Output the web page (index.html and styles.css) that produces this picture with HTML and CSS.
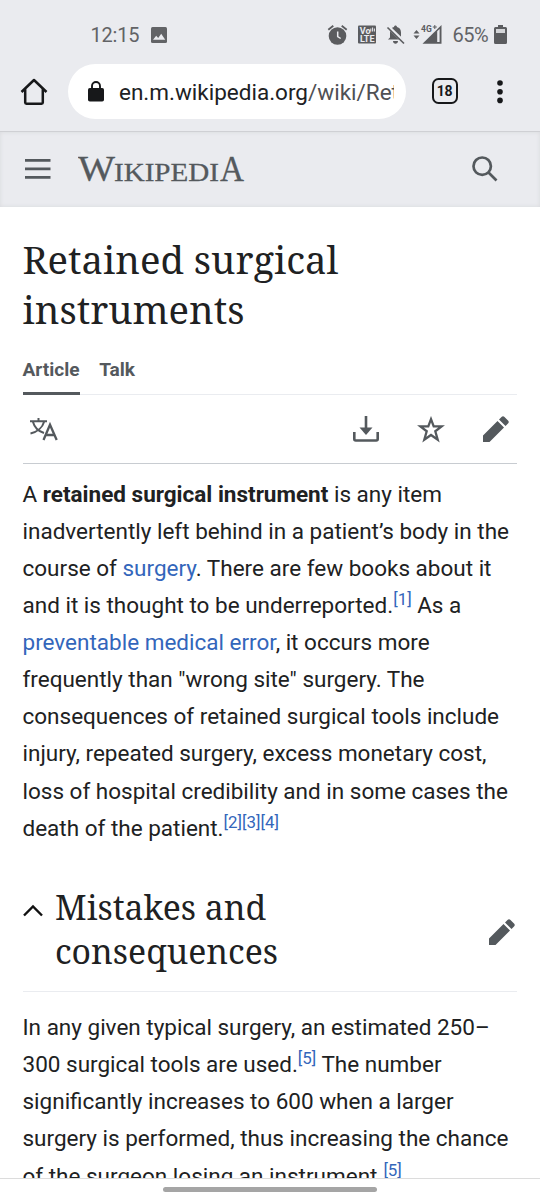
FILE: index.html
```html
<!DOCTYPE html>
<html lang="en">
<head>
<meta charset="utf-8">
<title>Retained surgical instruments</title>
<link rel="stylesheet" href="styles.css">
</head>
<body>
<div class="phone">
  <div class="status">
    <span class="clock">12:15</span>
    <svg class="photo" width="16" height="16" viewBox="0 0 16 16"><rect width="16" height="16" rx="1.5" fill="#626366"/><path d="M2 12.8 5.2 8.7l2 2.3 3-4.2 4 6z" fill="#eaebef"/></svg>
    <svg class="icons" width="115" height="22" viewBox="328 24 115 22" fill="#5b5c5f">
      <circle cx="338.500" cy="36" r="8.800"/><path d="M329.300 29.700l5-4M347.700 29.700l-5-4" stroke="#5b5c5f" stroke-width="1.800"/><path d="M338.700 31.500v5l3 2" fill="none" stroke="#eaebef" stroke-width="1.500"/>
      <rect x="359" y="25.500" width="18" height="18" rx="1"/>
      <text x="360.800" y="33.700" class="volte">Vo</text><text x="361" y="42" class="volte">LTE</text><path d="M371.800 28.500v3M373.600 27.500v4M375.400 28.500v3" stroke="#eaebef" stroke-width="1"/>
      <path d="M389 39.500h15l-2-2v-5c0-3-1.500-5-4-5.500-.2-2-2.800-2-3 0-3 .8-4 3-4 5.500v5zM394 41h5c0 3.500-5 3.500-5 0z"/><path d="M389 26.500l16.500 16" stroke="#eaebef" stroke-width="3.500"/><path d="M388.500 27.500l16.500 16" stroke="#5b5c5f" stroke-width="1.700"/>
      <path d="M414.500 33.500l3-3.500 3 3.500zM414.500 35.500l3 3.500 3-3.500z"/>
      <path d="M423.500 43.700 442.500 25v18.700z"/><path d="M438.200 31.300l2.400-2.300v13h-2.400z" fill="#eaebef"/>
      <path d="M421 24h17v5l-5 4h-12z" fill="#eaebef"/><text x="422" y="31.500" class="network">4G</text><path d="M433.800 27h4M435.800 25v4" stroke="#5b5c5f" stroke-width="1"/>
    </svg>
    <span class="percent">65%</span>
    <svg class="battery" width="13" height="19" viewBox="0 0 13 19"><path d="M4 0h5v2h2.500Q13 2 13 3.500v14q0 1.500-1.500 1.500h-10Q0 19 0 17.500v-14Q0 2 1.500 2H4z" fill="#5b5c5f"/><path d="M2 4h9v4H2z" fill="#d4d5d8"/></svg>
  </div>
  <div class="browser">
    <svg class="home" width="28" height="28" viewBox="0 0 28 28" fill="none" stroke="#17181a" stroke-width="2.500" stroke-linejoin="round"><path d="M1.500 14 14 2l12.500 12M5.200 11v13.500q0 1.200 1.200 1.200h15.200q1.200 0 1.200-1.200V11"/></svg>
    <div class="address">
      <svg width="16" height="21" viewBox="0 0 16 21"><rect y="7" width="16" height="13.500" rx="1.800" fill="#17181a"/><path d="M4 8V5a4 4 0 0 1 8 0v3" fill="none" stroke="#17181a" stroke-width="1.900"/></svg>
      <div class="url">en.m.wikipedia.org<span>/wiki/Ret</span></div>
    </div>
    <div class="tabs">18</div>
    <svg class="more" width="6" height="24" viewBox="0 0 6 24" fill="#17181a"><circle cx="3" cy="3" r="2.800"/><circle cx="3" cy="11.700" r="2.800"/><circle cx="3" cy="20.400" r="2.800"/></svg>
  </div>
  <header class="site">
    <svg class="menu" width="26" height="20" viewBox="0 0 26 20"><path d="M0 1.400h25.500M0 9.900h25.500M0 18.400h25.500" stroke="#54595d" stroke-width="2.700"/></svg>
    <svg class="wordmark" width="168" height="40" viewBox="0 -5 168 40"><text y="25" class="logo"><tspan x="0" class="cap" textLength="37" lengthAdjust="spacingAndGlyphs">W</tspan><tspan x="36" class="small" textLength="105" lengthAdjust="spacingAndGlyphs">IKIPEDI</tspan><tspan x="142" class="cap" textLength="24" lengthAdjust="spacingAndGlyphs">A</tspan></text></svg>
    <svg class="search" width="26" height="26" viewBox="0 0 26 26" fill="none" stroke="#54595d" stroke-width="2.700"><circle cx="10.200" cy="10.200" r="8.700"/><path d="M16.500 16.500l8 8"/></svg>
  </header>
  <main class="page">
    <h1>Retained surgical<br>instruments</h1>
    <nav class="views"><a class="current">Article</a><a>Talk</a></nav>
    <div class="actions">
      <svg class="language" width="30" height="26" viewBox="0 0 30 26" fill="none" stroke="#54595d" stroke-width="2"><path d="M1 4.300h17M9.500 1v3.300M4 5c1.500 5.500 6 9.500 11 11M15 5C13.500 10.500 8 15 1.500 16.500"/><path d="M14.500 23 21 7.700 27.700 23M16.800 18h8.500" stroke-width="2.300"/></svg>
      <svg class="download" width="26" height="26" viewBox="0 0 26 26"><path d="M1.300 16v7q0 1.500 1.500 1.500h20.400q1.500 0 1.500-1.500v-7M13 0v14" fill="none" stroke="#54595d" stroke-width="2.600"/><path d="M6.500 11.500h13L13 19z" fill="#54595d"/></svg>
      <svg class="star" width="28" height="27" viewBox="0 0 28 27"><path d="M14 3.200 16.700 10.400H24.600L18.300 15.300 20.700 23.700 14 19 7.300 23.700 9.700 15.300 3.400 10.400h7.900z" fill="none" stroke="#54595d" stroke-width="2.300"/></svg>
      <svg width="26" height="26" viewBox="0 0 26 26" fill="#54595d"><path d="M0 19.500 14.500 5l6.500 6.500L6.500 26H0zM16 3.500 18.500 1q1.500-1.500 3 0L25 4.500q1.500 1.500 0 3L22.500 10z"/></svg>
    </div>
    <p class="intro">A <b>retained surgical instrument</b> is any item<br>inadvertently left behind in a patient’s body in the<br>course of <a>surgery</a>. There are few books about it<br>and it is thought to be underreported.<sup>[1]</sup> As a<br><a>preventable medical error</a>, it occurs more<br>frequently than "wrong site" surgery. The<br>consequences of retained surgical tools include<br>injury, repeated surgery, excess monetary cost,<br>loss of hospital credibility and in some cases the<br>death of the patient.<sup>[2][3][4]</sup></p>
    <section class="heading">
      <svg class="chevron" width="20" height="13" viewBox="0 0 20 13"><path d="M1 11.500 10 2.500l9 9" fill="none" stroke="#111" stroke-width="2.400"/></svg>
      <h2>Mistakes and<br>consequences</h2>
      <svg class="edit" width="26" height="26" viewBox="0 0 26 26" fill="#54595d"><path d="M0 19.500 14.500 5l6.500 6.500L6.500 26H0zM16 3.500 18.500 1q1.500-1.500 3 0L25 4.500q1.500 1.500 0 3L22.500 10z"/></svg>
    </section>
    <p class="body">In any given typical surgery, an estimated 250–<br>300 surgical tools are used.<sup>[5]</sup> The number<br>significantly increases to 600 when a larger<br>surgery is performed, thus increasing the chance<br>of the surgeon losing an instrument.<sup>[5]</sup></p>
  </main>
  <footer class="gesture"><div class="handle"></div></footer>
</div>
</body>
</html>
```
FILE: styles.css
```css
* { box-sizing: border-box; }
body { margin: 0; background: #fff; font-family: Roboto, "Liberation Sans", sans-serif; color: #202122; }
svg { display: block; flex: none; }
.phone { width: 540px; height: 1200px; display: flex; flex-direction: column; overflow: hidden; }
.status { height: 64px; flex: none; background: #eaebef; display: flex; align-items: center; padding: 5px 32px 0 90.500px; color: #626366; font-size: 20px; }
.clock { width: 61.500px; letter-spacing: -.2px; }
.icons { margin-left: 160px; }
.volte { font: bold 9px Roboto, sans-serif; fill: #eaebef; }
.network { font: bold 8.500px Roboto, sans-serif; }
.percent { width: 42px; margin-left: 10px; letter-spacing: -.5px; }
.battery { margin: 0 1px 0 auto; }
.browser { height: 67px; flex: none; background: #eaebef; display: flex; align-items: flex-start; padding: 0 0 0 20px; }
.home { margin-top: 14px; }
.address { width: 338px; height: 55px; margin-left: 19.500px; border-radius: 28px; background: #fff; display: flex; align-items: center; padding: 0 10px 0 20.500px; }
.url { margin-left: 15px; width: 274.500px; overflow: hidden; white-space: nowrap; font-size: 22.500px; color: #202124; padding: 1px 0; }
.url span { color: #4f5054; }
.tabs { width: 26px; height: 26px; margin: 14px 0 0 26px; border: 2.500px solid #17181a; border-radius: 6.500px; font-size: 14px; font-weight: 700; letter-spacing: -.3px; line-height: 22px; text-align: center; color: #17181a; }
.more { margin: 16px 0 0 39.500px; }
.site { height: 76px; flex: none; border-top: 1px solid #cfd0d4; background: #eaebef; box-shadow: inset 0 0 4px #d8d9dc; display: flex; align-items: center; padding: 0 42px 2px 25px; }
.wordmark { margin: 4px 0 0 27px; }
.logo { font-family: "Liberation Serif", serif; fill: #54595d; stroke: #54595d; stroke-width: .3px; }
.cap { font-size: 36px; }
.small { font-size: 26px; }
.search { margin-left: auto; }
.page { flex: 1; min-height: 0; overflow: hidden; padding: 27px 23px 0 22.500px; }
h1, h2 { font-family: "Noto Serif", "Droid Serif", "DejaVu Serif Condensed", serif; font-weight: 400; margin: 0; white-space: nowrap; }
h1 { font-size: 38.250px; line-height: 50px; }
h2 { font-size: 33.750px; line-height: 44px; margin-left: 12.500px; }
.views { height: 61px; border-bottom: 1px solid #eaecf0; display: flex; gap: 19.500px; font-size: 19.100px; font-weight: 700; color: #54595d; }
.views a { height: 61px; padding-top: 25px; line-height: 22px; }
.current { border-bottom: 3px solid #54595d; }
.actions { height: 69px; border-bottom: 1px solid #c8ccd1; display: flex; align-items: center; padding: 0 8.500px 0 6px; }
.language { margin-top: 2px; }
.download { margin-left: auto; }
.star { margin: 0 37.500px 0 38.500px; }
p { margin: 0; font-size: 22.500px; line-height: 37.125px; white-space: nowrap; }
.intro { margin-top: 11.500px; }
a { color: inherit; }
p a, sup { color: #3366bb; }
sup { font-size: 16.900px; line-height: 1; vertical-align: 8px; }
.heading { display: flex; align-items: flex-start; margin-top: 38.250px; height: 107px; border-bottom: 1px solid #eaecf0; }
.chevron { margin-top: 18.500px; }
.edit { margin: 34px 2.500px 0 auto; }
.body { margin-top: 17px; }
.gesture { height: 22px; flex: none; border-top: 1px solid #dcdcdc; background: #fff; display: flex; justify-content: center; padding-top: 7.500px; }
.handle { width: 214px; height: 5px; border-radius: 3px; background: #a5a5a5; }
```
